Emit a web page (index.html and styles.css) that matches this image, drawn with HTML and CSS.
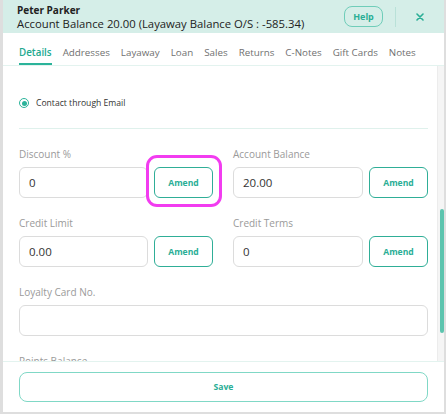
FILE: index.html
```html
<!DOCTYPE html>
<html>
<head>
<meta charset="utf-8">
<link rel="stylesheet" href="styles.css">
</head>
<body>
<div class="modal">
  <header class="head">
    <div class="who">
      <div class="name">Peter Parker</div>
      <div class="bal">Account Balance 20.00 (Layaway Balance O/S : -585.34)</div>
    </div>
    <button class="help">Help</button>
    <span class="vdiv"></span>
    <span class="close"><svg width="8" height="8" viewBox="0 0 8 8"><path d="M1 1L7 7M7 1L1 7" stroke="#2aae96" stroke-width="1.6" stroke-linecap="round"/></svg></span>
  </header>
  <nav class="tabs">
    <span class="tab active">Details</span>
    <span class="tab">Addresses</span>
    <span class="tab">Layaway</span>
    <span class="tab">Loan</span>
    <span class="tab">Sales</span>
    <span class="tab">Returns</span>
    <span class="tab">C-Notes</span>
    <span class="tab">Gift Cards</span>
    <span class="tab">Notes</span>
  </nav>
  <main class="body">
    <div class="radio-row"><span class="radio"></span><span class="radio-label">Contact through Email</span></div>
    <div class="hr"></div>
    <div class="grid">
      <div class="field">
        <div class="label">Discount %</div>
        <div class="pair"><div class="input">0</div><div class="amend-wrap hl"><button class="amend">Amend</button></div></div>
      </div>
      <div class="field">
        <div class="label">Account Balance</div>
        <div class="pair"><div class="input">20.00</div><div class="amend-wrap"><button class="amend">Amend</button></div></div>
      </div>
      <div class="field">
        <div class="label">Credit Limit</div>
        <div class="pair"><div class="input">0.00</div><div class="amend-wrap"><button class="amend">Amend</button></div></div>
      </div>
      <div class="field">
        <div class="label">Credit Terms</div>
        <div class="pair"><div class="input">0</div><div class="amend-wrap"><button class="amend">Amend</button></div></div>
      </div>
      <div class="field wide">
        <div class="label">Loyalty Card No.</div>
        <div class="input"></div>
      </div>
      <div class="field wide">
        <div class="label">Points Balance</div>
        <div class="input"></div>
      </div>
    </div>
    <div class="track"><div class="thumb"></div></div>
  </main>
  <footer class="foot"><button class="save">Save</button></footer>
</div>
</body>
</html>
```
FILE: styles.css
```css
* { box-sizing: border-box; }
html, body { margin: 0; padding: 0; }
body {
  background: #dedede;
  font-family: "Open Sans", "DejaVu Sans", sans-serif;
  width: 446px;
  height: 414px;
  overflow: hidden;
}
.modal {
  margin: 0 2px 0 3px;
  height: 412px;
  background: #fff;
  display: flex;
  flex-direction: column;
}
.head {
  height: 33px;
  background: #d5eee8;
  display: flex;
  align-items: center;
  padding: 0 0 0 14px;
  flex-shrink: 0;
}
.who { flex: 1; }
.name { font-size: 10px; font-weight: 700; color: #222; line-height: 14px; }
.bal { font-size: 11.3px; color: #222; line-height: 14px; }
.help {
  width: 39px; height: 21px;
  border: 1.5px solid #6fcdb9;
  border-radius: 8px;
  background: transparent;
  color: #2aae96;
  font-family: inherit;
  font-weight: 700;
  font-size: 9px;
  padding: 0;
  margin-right: 12px;
}
.vdiv { width: 1px; height: 20px; background: #b9e1d8; margin-right: 20px; }
.close { width: 8px; height: 8px; display: flex; margin-right: 20px; }
.tabs {
  height: 33px;
  flex-shrink: 0;
  display: flex;
  align-items: flex-end;
  gap: 11px;
  padding: 0 0 0 16px;
  border-bottom: 1px solid #e3f3ef;
}
.tab {
  font-size: 9.8px;
  color: #707070;
  line-height: 14px;
  padding-bottom: 3px;
  border-bottom: 2px solid transparent;
}
.tab.active { color: #22a98f; font-weight: 600; border-bottom-color: #2bb39a; }
.body {
  flex: 1;
  position: relative;
  overflow: hidden;
  padding: 0 16px;
}
.radio-row { display: flex; align-items: center; height: 20px; margin-top: 27px; }
.radio {
  width: 10px; height: 10px; border-radius: 50%;
  border: 1.5px solid #2bb39a;
  display: flex; align-items: center; justify-content: center;
  flex-shrink: 0;
}
.radio::after { content: ""; width: 5px; height: 5px; border-radius: 50%; background: #2bb39a; }
.radio-label { font-size: 8.6px; color: #333; margin-left: 7px; }
.hr { height: 1px; background: #dff1ec; margin-top: 15px; }
.grid {
  display: grid;
  grid-template-columns: 194px 195px;
  column-gap: 20px;
  row-gap: 17px;
  margin-top: 17px;
}
.wide { grid-column: 1 / 3; }
.label { font-size: 10px; color: #9a9a9a; line-height: 16px; margin-bottom: 5px; }
.pair { display: flex; gap: 6px; }
.input {
  flex: 1;
  height: 31px;
  border: 1px solid #dcdcdc;
  border-radius: 6px;
  font-size: 11.5px;
  color: #333;
  display: flex;
  align-items: center;
  padding-left: 9px;
}
.amend-wrap { position: relative; width: 59px; }
.amend {
  width: 59px; height: 31px;
  border: 1.5px solid #2fae97;
  border-radius: 6px;
  background: #fff;
  color: #2aae96;
  font-family: inherit;
  font-weight: 700;
  font-size: 8.6px;
  padding: 0;
}
.hl::after {
  content: "";
  position: absolute;
  left: -8px; top: -12px; right: -9px; bottom: -9px;
  border: 3px solid #f23cf0;
  border-radius: 11px;
}
.track {
  position: absolute;
  right: 0; top: 0; bottom: 0;
  width: 7px;
  background: #f5f5f5;
  border-left: 1px solid #ececec;
}
.thumb {
  position: absolute;
  left: 2px; top: 143px;
  width: 4px; height: 124px;
  background: #5cc4ae;
  border-radius: 2px;
}
.foot {
  flex-shrink: 0;
  height: 51px;
  border-top: 1px solid #e3f3ef;
  padding: 10px 16px;
  background: #fff;
}
.save {
  width: 100%; height: 30px;
  border: 1.5px solid #80d8c6;
  border-radius: 8px;
  background: #fff;
  color: #2aae96;
  font-family: inherit;
  font-weight: 700;
  font-size: 8.6px;
  padding: 0;
}
```
